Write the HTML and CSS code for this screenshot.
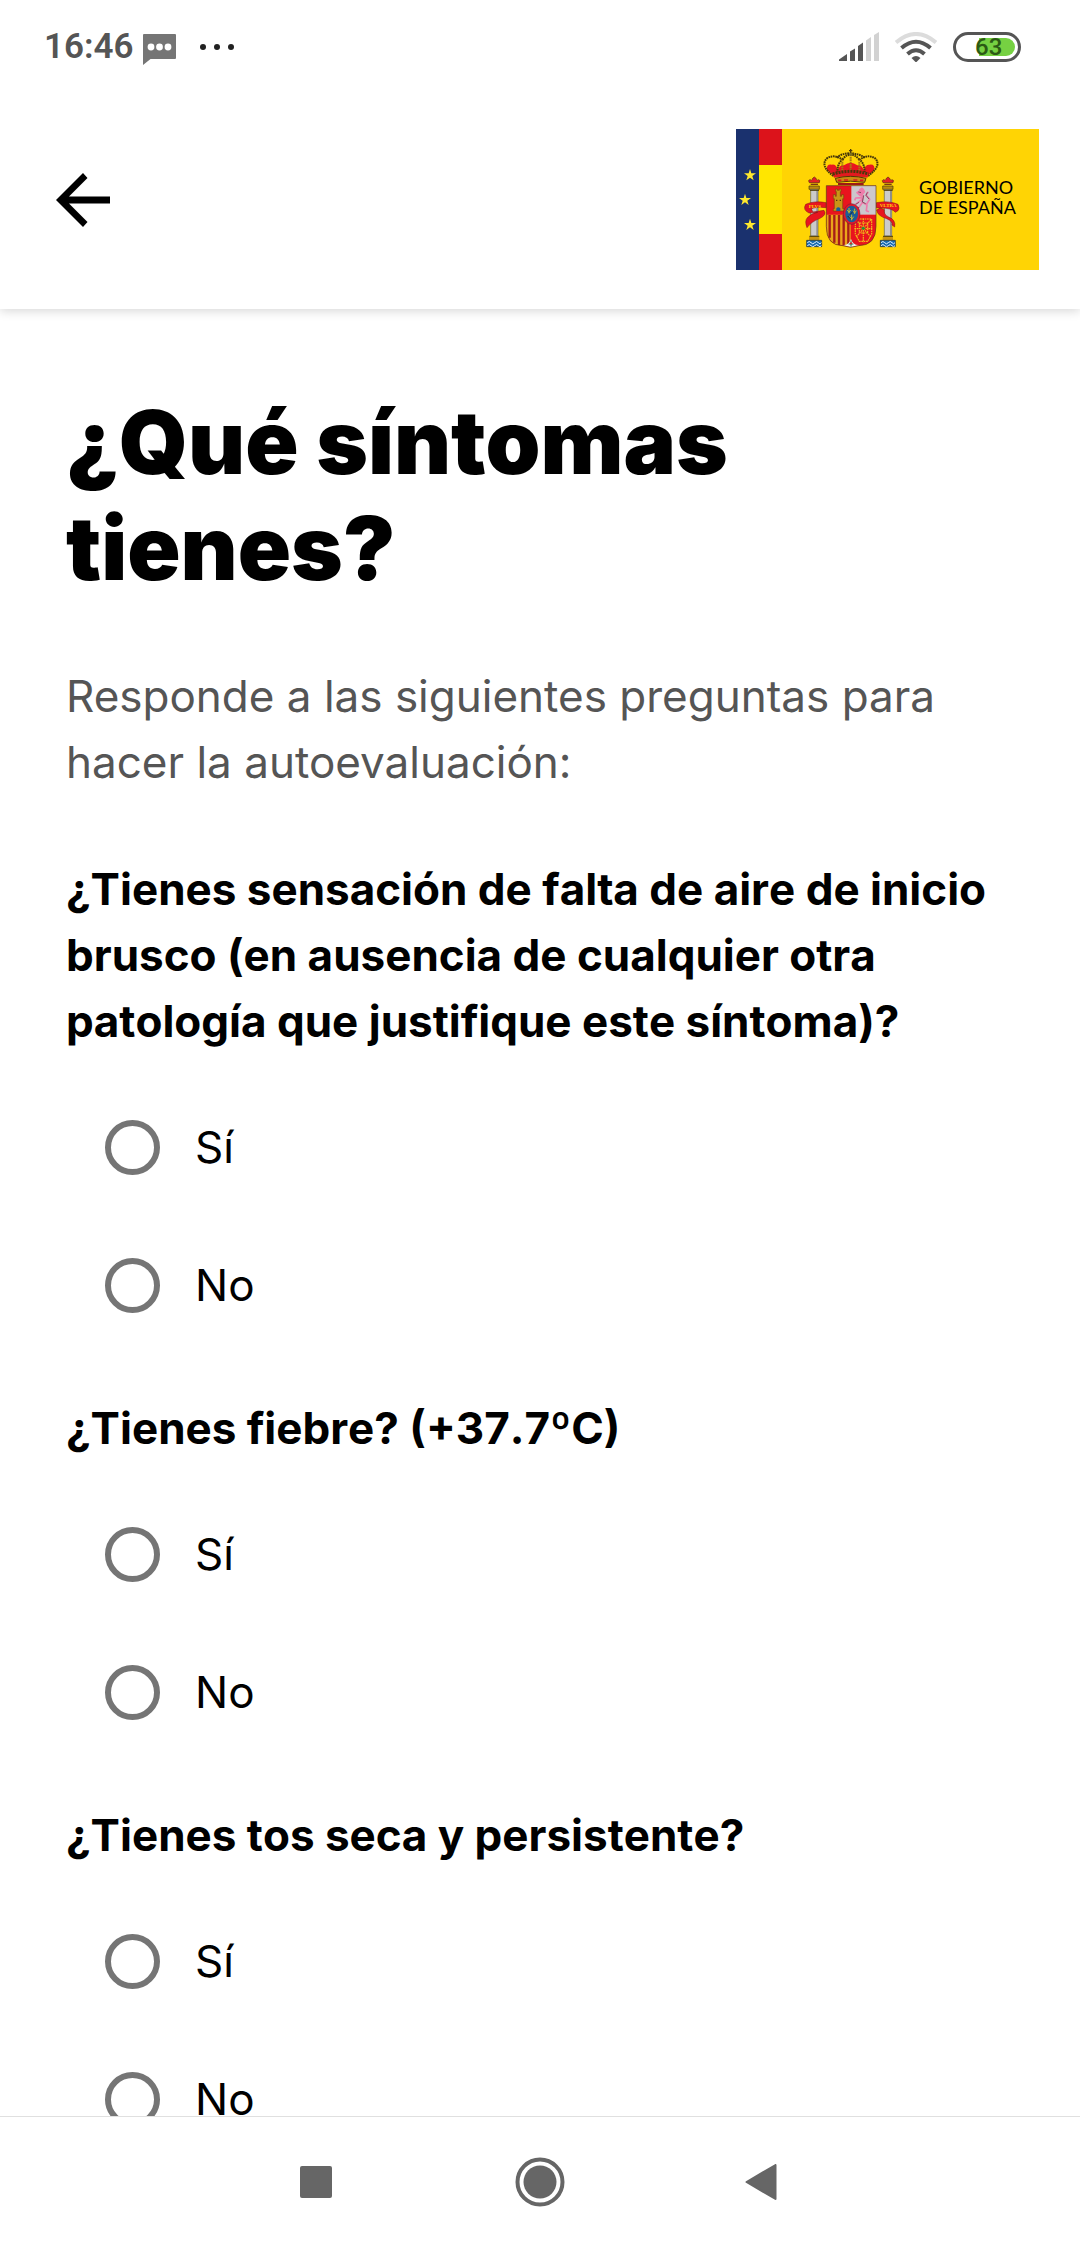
FILE: index.html
```html
<!DOCTYPE html>
<html lang="es">
<head>
<meta charset="utf-8">
<meta name="viewport" content="width=device-width, initial-scale=1">
<title>Autoevaluación</title>
<link rel="stylesheet" href="styles.css">
</head>
<body>
<div class="screen">
  <div class="status-bar">
    <div class="status-left">
      <span class="clock">16:46</span>
      <svg class="chat-icon" width="33" height="31" viewBox="0 0 33 31" aria-hidden="true">
        <path d="M1 0h31a1 1 0 0 1 1 1v23a1 1 0 0 1-1 1H7.500L0 31V1a1 1 0 0 1 1-1z" fill="#757575"/>
        <g fill="#fff"><circle cx="8" cy="13" r="3.400"/><circle cx="16.500" cy="13" r="3.400"/><circle cx="25" cy="13" r="3.400"/></g>
      </svg>
      <svg class="more-icon" width="34" height="6" viewBox="0 0 34 6" aria-hidden="true">
        <g fill="#212121"><circle cx="3" cy="3" r="3"/><circle cx="17" cy="3" r="3"/><circle cx="31" cy="3" r="3"/></g>
      </svg>
    </div>
    <div class="status-right">
      <svg width="40" height="30" viewBox="0 0 40 30" aria-hidden="true">
        <g fill="#555"><path d="M0 29v-1.500L8 22v7z"/><path d="M11 29V19.500l5-3V29z"/><path d="M19 29V14l5-3.500V29z"/></g>
        <g fill="#d2d2d2"><path d="M27 29V8.500L32 5v24z"/><path d="M35 29V3l5-3v29z"/></g>
      </svg>
      <svg width="42" height="30" viewBox="0 0 42 30" fill="none" stroke-width="4" aria-hidden="true">
        <path d="M1 10.500Q21-6.500 41 10.500" stroke="#dcdcdc"/>
        <path d="M6.500 16Q21 3.500 35.500 16M12.500 22Q21 14.500 29.500 22" stroke="#555"/>
        <path d="M16.500 26q4.500-4 9 0L21 30.500z" fill="#555"/>
      </svg>
      <div class="battery"><span class="battery-level">63</span></div>
    </div>
  </div>

  <header class="app-bar">
    <button class="back" type="button" aria-label="Volver">
      <svg width="54" height="54" viewBox="0 0 54 54" aria-hidden="true">
        <path d="M54 23.500H13L31.500 5 27 0 0 27l27 27 4.500-5L13 30.500h41z" fill="#000"/>
      </svg>
    </button>
    <div class="gov-logo">
      <svg width="183" height="141" viewBox="0 0 549 423" aria-hidden="true">
        <path fill="#1a316e" d="M0 0h69v423H0z"/>
        <path fill="#dc131b" d="M69 0h69v423H69z"/>
        <path fill="#ffe600" d="M69 108h69v207H69z"/>
        <g fill="#ffe92e">
          <path id="star" d="M42 120l4 13h14l-11 8 4 13-11-8-11 8 4-13-11-8h14z"/>
          <use href="#star" x="-15" y="74"/><use href="#star" y="149"/>
        </g>
        <g transform="translate(132 3)">
          <!-- pillars -->
          <g id="pillar">
            <path d="M88 158q-5-9 3-9 4 4 5 0 2-6 7-8 5 2 7 8 2 3 5 0 7 0 3 9z" fill="#e51f26" stroke="#5a3010" stroke-width="2"/>
            <path d="M92 163h22" stroke="#7c3b12" stroke-width="4"/>
            <path d="M87 168h31v10H87z" fill="#b98912" stroke="#4a3a08" stroke-width="2"/>
            <path d="M92 179h22v139H92z" fill="#cbcbcb" stroke="#64604f" stroke-width="2"/>
            <path d="M109 180h5v137h-5z" fill="#8e8e8e"/>
            <path d="M90 181h27M88 319h30" stroke="#4a3a08" stroke-width="3"/>
            <path d="M87 321h31v9H87z" fill="#c89612"/>
            <path d="M80 331h45v19H80z" fill="#176ab0" stroke="#13243a" stroke-width="2"/>
            <path d="M82 338q6-7 11 0t11 0 11 0 9 0M82 347q6-7 11 0t11 0 11 0 9 0" fill="none" stroke="#e6f5ff" stroke-width="3"/>
          </g>
          <use href="#pillar" x="221"/>
          <g fill="#e8151f" stroke="#7a1014" stroke-width="1.500">
            <path d="M77 223q26-12 62-5v15q-33-3-45 4l5 9 33-5q9 14-12 24-26 10-39 28-8-20 1-30 13-14 31-16l-26 2q-20-9-10-26z"/>
            <path d="M354 223q-26-12-65-5v15q16 0 24 6-3 14 13 22 22 8 18 30l-8-6q4-10-16-19-28-8-30-26l11-6q36 0 45 13l8-5q6-6 0-19z"/>
          </g>
          <text class="motto" x="86" y="233">PLVS</text>
          <text class="motto" x="299" y="232">VLTRA</text>
          <!-- crown -->
          <path d="M146 128q-30-40 8-48 14-9 30-4 12-8 28-8t28 8q18-6 30 4 38 8 8 48l-17 12H163z" fill="#ffd404"/>
          <path d="M141 121q-3-20 15-17 12-2 17 16 6-16 19-14 10-8 20-8t20 8q14-2 19 14 6-17 17-16 18-3 15 17l-24 19h-92z" fill="#e81620"/>
          <g fill="none" stroke="#463609" stroke-width="6" stroke-dasharray="5 2">
            <path d="M160 138Q118 106 142 84q22-12 45 5-18 14-14 48M264 138q44-32 20-54-22-12-45 5 18 14 14 48"/>
            <path d="M170 83q16-14 42-13t42 13M187 89q11-15 25-15t26 15"/>
            <path d="M212 74v50M187 89v38M238 89v38" stroke="#a87c10"/>
          </g>
          <path d="M156 130q56-20 112 0l-6 13q-50-12-100 0z" fill="#e31a1f"/>
          <path d="M158 132q54-16 108 0" fill="none" stroke="#4b380a" stroke-width="9" stroke-dasharray="6 3"/>
          <path d="M166 145q46-12 92 0l-4 12q-42-7-84 0z" fill="#c98a10" stroke="#543307" stroke-width="3"/>
          <path d="M174 151h10m8-1h12m16 0h12m8 1h10" stroke="#d71b1f" stroke-width="5"/>
          <path d="M174 162h77" stroke="#9d1a14" stroke-width="6"/>
          <path d="M212 57v15M207 62h10" stroke="#4b380a" stroke-width="4"/>
          <circle cx="212" cy="73" r="5" fill="#7c701e"/>
          <!-- shield -->
          <path d="M139 167h149v122q0 58-52 58l-24 5-24-5q-49 0-49-58z" fill="#e9141e"/>
          <path d="M214 167h74v87h-74z" fill="#ccc8cc"/>
          <path d="M139 254h73v93h-24q-49-4-49-56z" fill="#eaa51a"/>
          <path d="M149 255v68M163 255v83M177 255v90M191 255v92M205 255v92" stroke="#a71d18" stroke-width="7"/>
          <path d="M188 345q18 2 25-18 7 20 25 18l-25 7z" fill="#eee"/>
          <path d="M213 332v18M206 342h14" stroke="#2c734c" stroke-width="3"/>
          <circle cx="213" cy="340" r="3" fill="#d41d25"/>
          <path d="M160 243v-7h3v-30h-3v-12h6v5h3v-14h-2v-8h5v4h6v-4h5v8h-2v14h4v-5h6v12h-3v30h4v7z" fill="#c99417" stroke="#65420a" stroke-width="1.500"/>
          <path d="M169 243v-8q6-7 12 0v8z" fill="#155e9b"/>
          <path d="M168 211h4m7 0h4" stroke="#533609" stroke-width="4"/>
          <path d="M243 181l-12 7 10 9 9 2-4 20-11 16-9 6M246 216l15 9-2 17 8 3M246 203l-19 1-3 7M248 207l-22 16M260 222l9-14-11-13 7-10" fill="none" stroke="#ee7cab" stroke-width="5" stroke-linejoin="round"/>
          <path d="M237 178l9-6 6 5 4 9-10 12-12-4 6-7z" fill="#ee7cab"/>
          <path d="M235 186l8 2M251 196l-4 20 10 5M227 223l10-6M262 187l-4 9 9 11M229 240l8-9" fill="none" stroke="#4d3038" stroke-width="2"/>
          <g fill="none" stroke="#efba1a" stroke-width="3.500" stroke-dasharray="5 2">
            <path d="M226 267h49v45l-12 22h-25l-12-22zM238 279h25v30h-25zM250 265v72M223 296h55M228 269l45 53M273 269l-45 53"/>
          </g>
          <circle cx="250" cy="295" r="5" fill="#2a8a38"/>
          <path d="M139 167h149v122q0 58-52 58l-24 5-24-5q-49 0-49-58z" fill="none" stroke="#5d3714" stroke-width="2"/>
          <ellipse cx="215" cy="252" rx="22" ry="28" fill="#1b5d97" stroke="#e2182a" stroke-width="6"/>
          <ellipse cx="215" cy="252" rx="25" ry="31" fill="none" stroke="#542040" stroke-width="1.500"/>
          <path d="M207 234v16m-5-10 5 7 5-7M224 236v16m-5-10 5 7 5-7M215 254v17m-6-11 6 8 6-8" fill="none" stroke="#c8b931" stroke-width="3"/>
          <path d="M203 258l9 9M218 245l-8 9" stroke="#16283d" stroke-width="3"/>
        </g>
      </svg>
      <span class="gov-name">GOBIERNO<br>DE ESPAÑA</span>
    </div>
  </header>

  <main class="content">
    <h1 class="title">¿Qué síntomas tienes?</h1>
    <p class="intro">Responde a las siguientes preguntas para hacer la autoevaluación:</p>
    <form class="questions">
      <fieldset class="question">
        <legend class="question-text">¿Tienes sensación de falta de aire de inicio brusco (en ausencia de cualquier otra patología que justifique este síntoma)?</legend>
        <div class="options">
          <label class="option"><input class="radio" type="radio" name="aire" value="si"><span>Sí</span></label>
          <label class="option"><input class="radio" type="radio" name="aire" value="no"><span>No</span></label>
        </div>
      </fieldset>
      <fieldset class="question">
        <legend class="question-text">¿Tienes fiebre? (+37.7ºC)</legend>
        <div class="options">
          <label class="option"><input class="radio" type="radio" name="fiebre" value="si"><span>Sí</span></label>
          <label class="option"><input class="radio" type="radio" name="fiebre" value="no"><span>No</span></label>
        </div>
      </fieldset>
      <fieldset class="question">
        <legend class="question-text">¿Tienes tos seca y persistente?</legend>
        <div class="options">
          <label class="option"><input class="radio" type="radio" name="tos" value="si"><span>Sí</span></label>
          <label class="option"><input class="radio" type="radio" name="tos" value="no"><span>No</span></label>
        </div>
      </fieldset>
    </form>
  </main>

  <nav class="system-nav" aria-label="Sistema">
    <button class="nav-button" type="button" aria-label="Recientes">
      <svg width="32" height="32" viewBox="0 0 32 32" aria-hidden="true"><rect width="32" height="32" rx="2" fill="#666"/></svg>
    </button>
    <button class="nav-button" type="button" aria-label="Inicio">
      <svg width="50" height="50" viewBox="0 0 50 50" aria-hidden="true"><circle cx="25" cy="25" r="22.500" fill="none" stroke="#666" stroke-width="4"/><circle cx="25" cy="25" r="16.500" fill="#666"/></svg>
    </button>
    <button class="nav-button" type="button" aria-label="Atrás">
      <svg width="38" height="36" viewBox="0 0 38 36" aria-hidden="true"><path d="M1.500 18 30.500 1v34z" fill="#666" stroke="#666" stroke-width="2" stroke-linejoin="round"/></svg>
    </button>
  </nav>
</div>
</body>
</html>
```
FILE: styles.css
```css
* {
  box-sizing: border-box;
}

body {
  margin: 0;
  background: #fff;
  color: #000;
  font-family: Inter, "Liberation Sans", sans-serif;
}

svg {
  display: block;
}

button {
  display: flex;
  align-items: center;
  justify-content: center;
  padding: 0;
  border: 0;
  background: none;
}

.screen {
  display: flex;
  flex-direction: column;
  height: 100vh;
}

/* Status bar */
.status-bar {
  flex: none;
  display: flex;
  align-items: center;
  justify-content: space-between;
  height: 94px;
  padding: 0 59px 0 44px;
}

.status-left {
  display: flex;
  align-items: center;
}

.clock {
  color: #555;
  font: 600 35px/42px Roboto, sans-serif;
}

.chat-icon {
  margin: 4px 0 0 9px;
}

.more-icon {
  margin-left: 24px;
}

.status-right {
  display: flex;
  align-items: center;
  gap: 16px;
}

.battery {
  display: flex;
  justify-content: flex-end;
  width: 68px;
  height: 30px;
  padding: 3px;
  border: 3px solid #555;
  border-radius: 15px;
}

.battery-level {
  width: 40px;
  height: 18px;
  border-radius: 0 9px 9px 0;
  background: linear-gradient(to right, transparent 4px, #76d142 4px);
  color: #2b5a14;
  font: 500 24px/18px Roboto, sans-serif;
}

/* App bar */
.app-bar {
  flex: none;
  position: relative;
  z-index: 1;
  display: flex;
  align-items: flex-start;
  justify-content: space-between;
  height: 215px;
  padding: 35px 41px 0 39px;
  background: #fff;
  box-shadow: 0 2px 10px rgba(0, 0, 0, 0.16);
  clip-path: inset(0 0 -16px 0);
}

.back {
  width: 88px;
  height: 142px;
}

.gov-logo {
  display: flex;
  align-items: center;
  width: 303px;
  height: 141px;
  background: #ffd404;
}

.motto {
  fill: #ffd404;
  font: 700 15px "Liberation Serif", serif;
}

.gov-name {
  padding-bottom: 6px;
  font: 400 18px/20px Lato, sans-serif;
}

/* Questionnaire */
.content {
  flex: 1;
  min-height: 0;
  overflow: auto;
  scrollbar-width: none;
  padding: 80px 66px 40px;
}

.title {
  margin: 0 0 62px;
  font-size: 88px;
  font-weight: 900;
  line-height: 106px;
}

.intro {
  margin: 0 0 61px;
  color: #555;
  font-size: 44px;
  line-height: 66px;
}

.questions {
  display: flex;
  flex-direction: column;
  gap: 41px;
}

.question {
  min-width: 0;
  margin: 0;
  padding: 0;
  border: 0;
}

.question-text {
  padding: 0;
  font-size: 44px;
  font-weight: 700;
  font-kerning: none;
  line-height: 66px;
}

.options {
  padding: 24px 0 0 39px;
}

.option {
  display: flex;
  align-items: center;
  gap: 35px;
  height: 138px;
  font-size: 44px;
  line-height: 66px;
}

.radio {
  appearance: none;
  width: 55px;
  height: 55px;
  margin: 0;
  border: 6px solid #757575;
  border-radius: 50%;
}

.radio:checked {
  background: radial-gradient(circle, #757575 45%, transparent 48%);
}

/* System navigation */
.system-nav {
  flex: none;
  display: flex;
  align-items: center;
  justify-content: center;
  gap: 128px;
  height: 130px;
  border-top: 1px solid #e0e0e0;
  background: #fff;
}

.nav-button {
  width: 96px;
  height: 96px;
}
```
